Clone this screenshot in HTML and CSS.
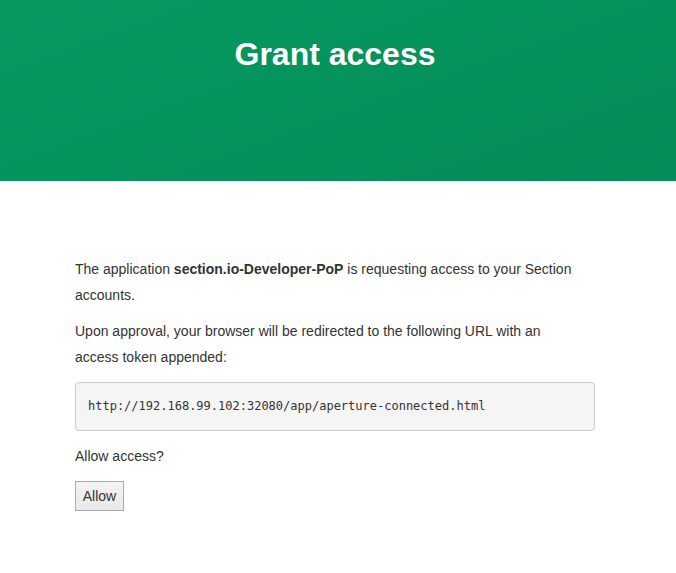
FILE: index.html
```html
<!DOCTYPE html>
<html>
<head>
<meta charset="utf-8">
<link rel="stylesheet" href="styles.css">
</head>
<body>
<header class="hero">
  <div class="container">
    <h1 class="title">Grant access</h1>
  </div>
</header>
<main class="container content">
  <p class="para first">The application <strong>section.io-Developer-PoP</strong> is requesting access to your Section accounts.</p>
  <p class="para">Upon approval, your browser will be redirected to the following URL with an access token appended:</p>
  <pre class="url">http://192.168.99.102:32080/app/aperture-connected.html</pre>
  <p class="para">Allow access?</p>
  <button class="btn" type="button">Allow</button>
</main>
</body>
</html>
```
FILE: styles.css
```css
html, body {
  margin: 0;
  padding: 0;
  background: #ffffff;
}
body {
  font-family: "Liberation Sans", Arial, sans-serif;
  font-size: 14px;
  color: #333333;
}
.container {
  width: 520px;
  margin-left: 75px;
}
.hero {
  height: 181px;
  background: linear-gradient(160deg, #069a61 0%, #058b57 100%);
  overflow: hidden;
}
.title {
  margin: 36px 0 0;
  text-align: center;
  font-size: 32px;
  font-weight: bold;
  line-height: 36px;
  color: #ffffff;
}
.content {
  padding-top: 75px;
}
.para {
  max-width: 505px;
  margin: 0 0 12px;
  line-height: 26px;
}
.para.first {
  margin-bottom: 10px;
}
.url {
  margin: 0 0 12px;
  padding: 14px 12px 14px 12px;
  font-family: "DejaVu Sans Mono", monospace;
  font-size: 12px;
  line-height: 19px;
  color: #333333;
  background: #f5f5f5;
  border: 1px solid #cccccc;
  border-radius: 4px;
}
.btn {
  display: block;
  margin: 0;
  width: 49px;
  height: 30px;
  padding: 0;
  font-family: "Liberation Sans", Arial, sans-serif;
  font-size: 14px;
  color: #333333;
  background: linear-gradient(#f4f4f4, #e9e9e9);
  border: 1px solid #aaaaaa;
  border-radius: 0;
}
```
